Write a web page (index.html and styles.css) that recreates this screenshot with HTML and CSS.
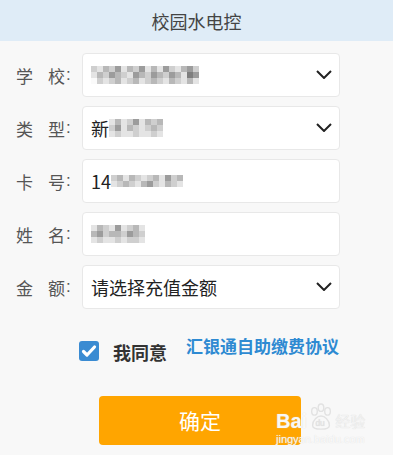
FILE: index.html
```html
<!DOCTYPE html>
<html lang="zh">
<head>
<meta charset="utf-8">
<link rel="stylesheet" href="styles.css">
</head>
<body>
<header class="topbar">校园水电控</header>
<main class="form">
  <div class="row">
    <div class="label"><span>学</span><span class="l2">校</span><span class="colon">:</span></div>
    <div class="field">
      <div class="pix w18"><i class="g2"></i><i class="g1"></i><i class="g3"></i><i class="g2"></i><i class="g4"></i><i class="g1"></i><i class="g3"></i><i class="g2"></i><i class="g4"></i><i class="g1"></i><i class="g3"></i><i class="g1"></i><i class="g4"></i><i class="g2"></i><i class="g1"></i><i class="g3"></i><i class="g4"></i><i class="g2"></i>
        <i class="g1"></i><i class="g3"></i><i class="g2"></i><i class="g4"></i><i class="g3"></i><i class="g2"></i><i class="g1"></i><i class="g4"></i><i class="g3"></i><i class="g2"></i><i class="g4"></i><i class="g3"></i><i class="g2"></i><i class="g4"></i><i class="g3"></i><i class="g1"></i><i class="g5"></i><i class="g4"></i>
        <i class="g0"></i><i class="g2"></i><i class="g1"></i><i class="g2"></i><i class="g3"></i><i class="g1"></i><i class="g2"></i><i class="g3"></i><i class="g1"></i><i class="g2"></i><i class="g3"></i><i class="g2"></i><i class="g1"></i><i class="g3"></i><i class="g2"></i><i class="g1"></i><i class="g3"></i><i class="g1"></i></div>
      <svg class="chev" viewBox="0 0 16 9"><path d="M1 1l7 7 7-7" fill="none" stroke="#222" stroke-width="2"/></svg>
    </div>
  </div>
  <div class="row">
    <div class="label"><span>类</span><span class="l2">型</span><span class="colon">:</span></div>
    <div class="field">
      <span class="val">新</span>
      <div class="pix w9"><i class="g1"></i><i class="g3"></i><i class="g1"></i><i class="g2"></i><i class="g4"></i><i class="g1"></i><i class="g3"></i><i class="g2"></i><i class="g3"></i>
        <i class="g2"></i><i class="g4"></i><i class="g1"></i><i class="g3"></i><i class="g2"></i><i class="g1"></i><i class="g2"></i><i class="g3"></i><i class="g2"></i>
        <i class="g1"></i><i class="g2"></i><i class="g1"></i><i class="g1"></i><i class="g2"></i><i class="g1"></i><i class="g1"></i><i class="g2"></i><i class="g1"></i></div>
      <svg class="chev" viewBox="0 0 16 9"><path d="M1 1l7 7 7-7" fill="none" stroke="#222" stroke-width="2"/></svg>
    </div>
  </div>
  <div class="row">
    <div class="label"><span>卡</span><span class="l2">号</span><span class="colon">:</span></div>
    <div class="field">
      <span class="val">14</span>
      <div class="pix w12"><i class="g2"></i><i class="g3"></i><i class="g1"></i><i class="g3"></i><i class="g2"></i><i class="g1"></i><i class="g2"></i><i class="g3"></i><i class="g1"></i><i class="g4"></i><i class="g2"></i><i class="g3"></i>
        <i class="g1"></i><i class="g2"></i><i class="g3"></i><i class="g2"></i><i class="g1"></i><i class="g3"></i><i class="g4"></i><i class="g2"></i><i class="g1"></i><i class="g3"></i><i class="g2"></i><i class="g1"></i></div>
    </div>
  </div>
  <div class="row">
    <div class="label"><span>姓</span><span class="l2">名</span><span class="colon">:</span></div>
    <div class="field">
      <div class="pix w9"><i class="g1"></i><i class="g3"></i><i class="g2"></i><i class="g1"></i><i class="g4"></i><i class="g1"></i><i class="g2"></i><i class="g3"></i><i class="g1"></i>
        <i class="g3"></i><i class="g4"></i><i class="g2"></i><i class="g3"></i><i class="g3"></i><i class="g2"></i><i class="g4"></i><i class="g3"></i><i class="g2"></i>
        <i class="g1"></i><i class="g2"></i><i class="g1"></i><i class="g1"></i><i class="g2"></i><i class="g1"></i><i class="g2"></i><i class="g2"></i><i class="g1"></i></div>
    </div>
  </div>
  <div class="row">
    <div class="label"><span>金</span><span class="l2">额</span><span class="colon">:</span></div>
    <div class="field">
      <span class="val">请选择充值金额</span>
      <svg class="chev" viewBox="0 0 16 9"><path d="M1 1l7 7 7-7" fill="none" stroke="#222" stroke-width="2"/></svg>
    </div>
  </div>

  <div class="agree">
    <span class="check"><svg viewBox="0 0 20 20"><path d="M4.5 10.5l3.5 3.5 7.5-8" fill="none" stroke="#fff" stroke-width="3.2" stroke-linecap="round" stroke-linejoin="round"/></svg></span>
    <span class="agree-text">我同意</span>
    <a class="agree-link">汇银通自助缴费协议</a>
  </div>

  <div class="actions">
    <button class="submit">确定</button>
  </div>
</main>
<div class="watermark">
  <div class="wm-top"><span class="wm-bai">Bai</span><svg class="wm-paw" viewBox="0 0 30 30"><g fill="none" stroke="#e2e2e2" stroke-width="1.5"><ellipse cx="8" cy="9" rx="3" ry="4"/><ellipse cx="15" cy="5" rx="3" ry="4"/><ellipse cx="22" cy="9" rx="3" ry="4"/><path d="M6 24c0-6 5-10 9-10s9 4 9 10c0 3-4 4-9 4s-9-1-9-4z"/></g><text x="9" y="25" font-size="9" fill="#e2e2e2" font-family="Liberation Sans">du</text></svg><span class="wm-jy">经验</span></div>
  <div class="wm-url">jingyan.baidu.com</div>
</div>
</body>
</html>
```
FILE: styles.css
```css
* { box-sizing: border-box; }
html, body { margin: 0; padding: 0; }
body {
  width: 393px;
  height: 455px;
  overflow: hidden;
  background: #f8f8f8;
  font-family: "Noto Sans CJK SC", "Noto Sans", sans-serif;
  color: #333;
  position: relative;
}
.topbar {
  height: 41px;
  background: #dfecf7;
  color: #444;
  font-size: 18px;
  display: flex;
  align-items: center;
  justify-content: center;
}
.form {
  padding: 12px 0 0 0;
  display: flex;
  flex-direction: column;
  gap: 9px;
}
.row {
  display: flex;
  align-items: center;
  height: 44px;
}
.label {
  width: 82px;
  padding-left: 16px;
  display: flex;
  align-items: center;
  font-size: 17px;
  color: #555;
}
.label .l2 { margin-left: 15px; }
.label .colon { margin-left: 1px; font-family: "Liberation Sans", sans-serif; }
.field {
  width: 258px;
  height: 44px;
  background: #fff;
  border: 1px solid #e8e8e8;
  border-radius: 4px;
  display: flex;
  align-items: center;
  padding: 0 6px 0 8px;
  position: relative;
}
.val {
  font-size: 18px;
  color: #222;
}
.chev {
  position: absolute;
  right: 7px;
  top: 16px;
  width: 16px;
  height: 9px;
}
.pix {
  display: grid;
  grid-auto-rows: 6px;
}
.pix.w18 { grid-template-columns: repeat(18, 6px); }
.pix.w12 { grid-template-columns: repeat(12, 6px); }
.pix.w9 { grid-template-columns: repeat(9, 6px); }
.pix i { display: block; }
.g0 { background: #fafafa; }
.g1 { background: #e4e4e4; }
.g2 { background: #cfcfcf; }
.g3 { background: #b8b8b8; }
.g4 { background: #9c9c9c; }
.g5 { background: #7e7e7e; }
.agree {
  margin-top: 23px;
  display: flex;
  align-items: center;
  padding-left: 79px;
  height: 20px;
}
.check {
  width: 20px;
  height: 20px;
  flex: none;
  background: #3a8bd2;
  border-radius: 3px;
  display: flex;
}
.check svg { width: 20px; height: 20px; }
.agree-text {
  margin-left: 14px;
  font-size: 18px;
  font-weight: bold;
  color: #333;
  line-height: 20px;
  position: relative;
  top: 1px;
}
.agree-link {
  margin-left: 19px;
  font-size: 17px;
  font-weight: bold;
  color: #2e8ad2;
  line-height: 20px;
  position: relative;
  top: -5px;
}
.actions {
  margin-top: 26px;
  padding-left: 99px;
  height: 49px;
}
.submit {
  display: block;
  width: 202px;
  height: 49px;
  border: none;
  border-radius: 4px;
  background: #ffa500;
  color: #fff;
  font-family: "Noto Sans CJK SC", sans-serif;
  font-size: 21px;
  line-height: 49px;
  padding: 0;
}
.watermark {
  position: absolute;
  left: 276px;
  top: 400px;
  width: 95px;
  color: rgba(255,255,255,0.85);
  font-family: "Liberation Sans", sans-serif;
  text-shadow: 0 0 1px #d6d6d6;
}
.wm-top { display: flex; align-items: flex-end; height: 32px; }
.wm-bai { font-size: 20px; font-weight: bold; line-height: 22px; }
.wm-paw { width: 28px; height: 30px; }
.wm-jy { font-family: "Noto Sans CJK SC", sans-serif; font-size: 15px; line-height: 22px; color: #f2f2f2; }
.wm-url { font-size: 11px; margin-top: 1px; }
```
